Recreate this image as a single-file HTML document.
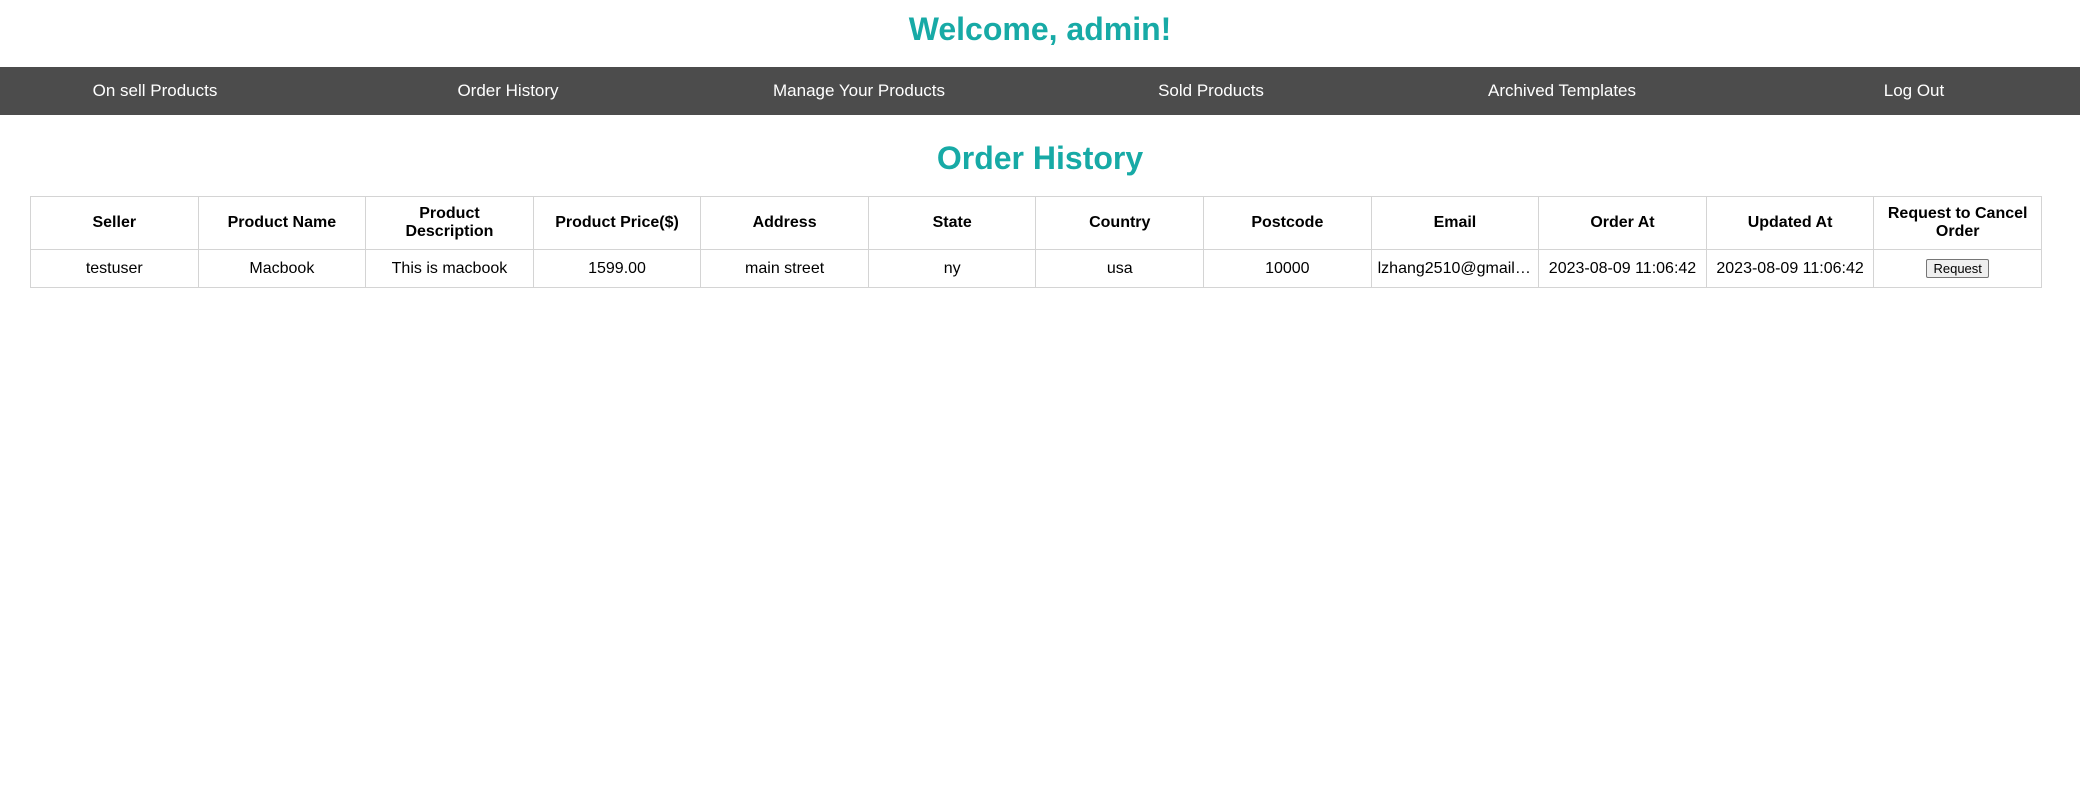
<!DOCTYPE html>
<html><head><style>
body{margin:0;width:2080px;height:790px;background:#fff;font-family:"Liberation Sans",Arial,sans-serif;position:relative;overflow:hidden}
h1{margin:0;position:absolute;left:0;width:2080px;text-align:center;color:#17aaa6;font-size:32px;font-weight:bold;line-height:38px}
.nav{position:absolute;top:67px;left:0;width:2080px;height:48px;background:#4c4c4c}
.nav span{position:absolute;top:0;line-height:48px;color:#fff;font-size:17px;transform:translateX(-50%);white-space:nowrap}
table{position:absolute;left:30px;top:196px;width:2012px;border-collapse:collapse;table-layout:fixed;font-size:16px}
td,th{border:1px solid #d4d4d4;text-align:center;padding:0 10px;overflow:hidden;white-space:nowrap;text-overflow:ellipsis}
th{height:52px;white-space:normal;line-height:18px}
td{height:37px}
button{font-family:"Liberation Sans",Arial,sans-serif;font-size:13px;padding:1px 6px;background:#efefef;border:1px solid #767676;border-radius:2px}
</style></head><body>
<h1 style="top:10px">Welcome, admin!</h1>
<div class="nav">
<span style="left:155px">On sell Products</span>
<span style="left:508px">Order History</span>
<span style="left:859px">Manage Your Products</span>
<span style="left:1211px">Sold Products</span>
<span style="left:1562px">Archived Templates</span>
<span style="left:1914px">Log Out</span>
</div>
<h1 style="top:139px">Order History</h1>
<table>
<tr><th>Seller</th><th>Product Name</th><th>Product Description</th><th>Product Price($)</th><th>Address</th><th>State</th><th>Country</th><th>Postcode</th><th>Email</th><th>Order At</th><th>Updated At</th><th>Request to Cancel Order</th></tr>
<tr><td>testuser</td><td>Macbook</td><td>This is macbook</td><td>1599.00</td><td>main street</td><td>ny</td><td>usa</td><td>10000</td><td style="padding:0 6px">lzhang2510@gmail.com</td><td style="padding:0 4px">2023-08-09 11:06:42</td><td style="padding:0 4px">2023-08-09 11:06:42</td><td><button>Request</button></td></tr>
</table>
</body></html>
